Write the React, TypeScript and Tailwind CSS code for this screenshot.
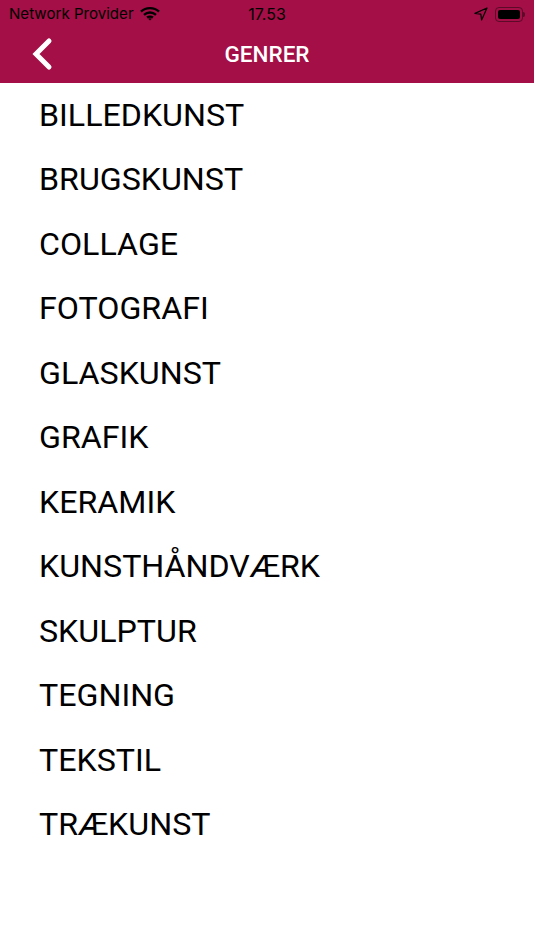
const GENRES = [
  "BILLEDKUNST",
  "BRUGSKUNST",
  "COLLAGE",
  "FOTOGRAFI",
  "GLASKUNST",
  "GRAFIK",
  "KERAMIK",
  "KUNSTHÅNDVÆRK",
  "SKULPTUR",
  "TEGNING",
  "TEKSTIL",
  "TRÆKUNST",
];

function WifiIcon() {
  return (
    <svg className="ml-[6px] h-[15px] w-[20px]" viewBox="0 0 20 15" fill="none" stroke="#000" strokeWidth={2.4}>
      <path d="M1 5.6C5.8 1 14.2 1 19 5.6" />
      <path d="M4 8.8C7.4 5.8 12.6 5.8 16 8.8" />
      <path d="M7 11.6C8.8 10.4 11.2 10.4 13 11.6" />
      <path d="M10 14.6L8.2 12.8C9.2 12.1 10.8 12.1 11.8 12.8Z" fill="#000" stroke="none" />
    </svg>
  );
}

export default function App() {
  return (
    <div className="h-[950px] w-[534px] overflow-hidden bg-white font-['Roboto',sans-serif]">
      <header className="h-[83px] bg-[#a30f46]">
        <div className="flex h-[28px] items-center justify-between pl-[9px] pr-[9px] text-black">
          <div className="flex w-[190px] items-center font-['Inter',sans-serif] text-[15.1px]">
            Network Provider
            <WifiIcon />
          </div>
          <span className="font-['Inter',sans-serif] text-[16px]">17.53</span>
          <div className="flex w-[190px] items-center justify-end gap-[7px]">
            <svg className="h-[14px] w-[14px]" viewBox="0 0 14 14" fill="none" stroke="#000" strokeWidth={1.2} strokeLinejoin="round">
              <path d="M13 1L1 6.4L6.8 7.2L7.6 13Z" />
            </svg>
            <div className="flex items-center">
              <div className="flex h-[15px] w-[28px] items-center rounded-[4px] border border-[#5c0a28] p-[2px]">
                <div className="h-full w-full rounded-[2px] bg-black" />
              </div>
              <div className="h-[5px] w-[2px] rounded-r-sm bg-[#5c0a28]" />
            </div>
          </div>
        </div>
        <div className="relative flex h-[54px] items-center justify-center">
          <svg className="absolute left-[31px] top-[9px] h-[34px] w-[22px]" viewBox="0 0 22 34" fill="none" stroke="#fff" strokeWidth={5} strokeLinecap="round">
            <path d="M18 4L5 17L18 30" />
          </svg>
          <h1 className="text-[22.5px] font-medium text-white">GENRER</h1>
        </div>
      </header>
      <ul className="-mt-[0.5px] pl-[39px]">
        {GENRES.map((genre) => (
          <li key={genre} className="flex h-[64.5px] items-center text-[32.2px] leading-none text-black">
            {genre}
          </li>
        ))}
      </ul>
    </div>
  );
}
